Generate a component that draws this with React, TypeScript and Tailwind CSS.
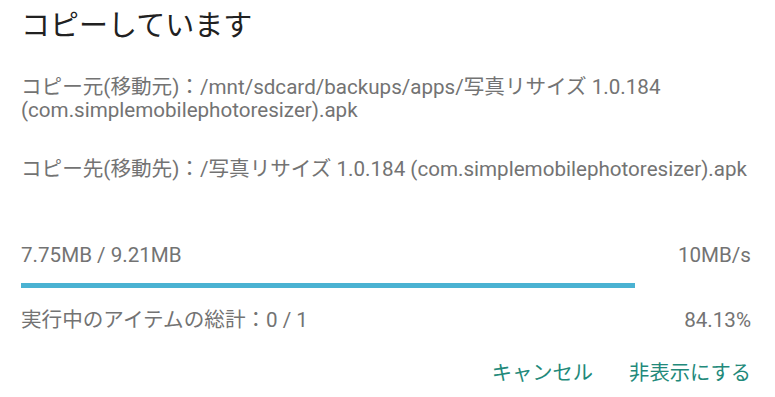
export default function App() {
  return (
    <div
      className="w-[775px] h-[397px] bg-white overflow-hidden pl-[21px] pr-[24px] flex flex-col"
      style={{ fontFamily: 'Roboto, "Noto Sans CJK JP", sans-serif' }}
    >
      <h1 className="mt-[8px] text-[29px] leading-[36px] text-[#212121]">コピーしています</h1>

      <p className="mt-[32px] text-[20.6px] leading-[23px] text-[#737373]">
        コピー元(移動元)：/mnt/sdcard/backups/apps/写真リサイズ 1.0.184
        <br />
        (com.simplemobilephotoresizer).apk
      </p>

      <p className="mt-[36px] text-[20.6px] leading-[23px] text-[#737373] whitespace-nowrap">
        コピー先(移動先)：/写真リサイズ 1.0.184 (com.simplemobilephotoresizer).apk
      </p>

      <div className="mt-[63px] flex justify-between text-[20.6px] leading-[23px] text-[#737373]">
        <span>7.75MB / 9.21MB</span>
        <span>10MB/s</span>
      </div>

      <div className="mt-[16px] h-[5px] w-full">
        <div className="h-full bg-[#4ab2d2]" style={{ width: "84.13%" }} />
      </div>

      <div className="mt-[21px] flex justify-between text-[20.6px] leading-[23px] text-[#737373]">
        <span>実行中のアイテムの総計：0 / 1</span>
        <span>84.13%</span>
      </div>

      <div className="mt-[30px] flex justify-end gap-[36px] text-[20.3px] leading-[23px] text-[#22897a]">
        <button>キャンセル</button>
        <button>非表示にする</button>
      </div>
    </div>
  );
}
